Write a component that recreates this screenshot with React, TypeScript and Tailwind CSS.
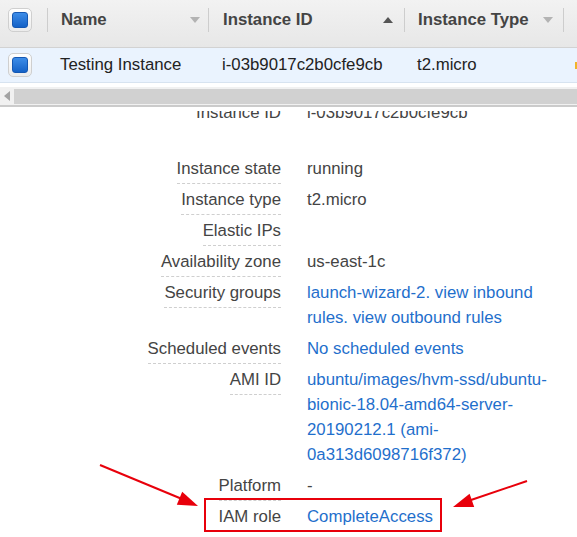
import React from "react";

const font = { fontFamily: '"Liberation Sans", Arial, sans-serif' };

function Checkbox() {
  return (
    <span className="grid h-[24px] w-[24px] place-items-center rounded-[5px] border border-[#cfcfcf] bg-gradient-to-b from-[#ffffff] to-[#ececec]">
      <span className="h-[16px] w-[16px] rounded-[3px] border border-[#1558b3] bg-gradient-to-b from-[#3d8de8] to-[#1462c7]" />
    </span>
  );
}

function Divider() {
  return <span className="h-[24px] w-px shrink-0 bg-[#cdcdcd]" />;
}

function Arrow({ up, dark }: { up?: boolean; dark?: boolean }) {
  return (
    <svg width="10" height="6" viewBox="0 0 10 6" className="shrink-0">
      <polygon points={up ? "0,6 10,6 5,0" : "0,0 10,0 5,6"} fill={dark ? "#555" : "#b3b3b3"} />
    </svg>
  );
}

type Row = { label: string; value?: string; link?: boolean; noLine?: boolean };

const rows: Row[] = [
  { label: "Instance state", value: "running" },
  { label: "Instance type", value: "t2.micro" },
  { label: "Elastic IPs" },
  { label: "Availability zone", value: "us-east-1c" },
  { label: "Security groups", value: "launch-wizard-2. view inbound rules. view outbound rules", link: true },
  { label: "Scheduled events", value: "No scheduled events", link: true },
  { label: "AMI ID", value: "ubuntu/images/hvm-ssd/ubuntu-bionic-18.04-amd64-server-20190212.1 (ami-0a313d6098716f372)", link: true },
  { label: "Platform", value: "-" },
  { label: "IAM role", value: "CompleteAccess", link: true },
];

function DetailRow({ row }: { row: Row }) {
  return (
    <>
      <div className="pb-[1px] pt-[2px] text-right">
        <span className={`inline-block pb-[2px] leading-[25px] ${row.noLine ? "border-b border-transparent" : "border-b border-dashed border-[#cfcfcf]"}`}>{row.label}</span>
      </div>
      <div className={`pb-[4px] pt-[2px] leading-[25px] ${row.link ? "text-[#1f6fcc]" : "text-[#444]"}`}>{row.value}</div>
    </>
  );
}

export default function App() {
  return (
    <div className="relative h-[537px] w-[577px] overflow-hidden bg-white text-[16.8px]" style={font}>
      <header className="flex h-[48px] items-center border-b border-[#d2d2d2] bg-gradient-to-b from-[#f2f2f2] to-[#e7e7e7] pb-[7px] font-bold text-[#444]">
        <div className="w-[47px] shrink-0 pl-[8px]"><Checkbox /></div>
        <Divider />
        <div className="flex w-[160px] shrink-0 items-center justify-between pl-[13px] pr-[8px]"><span>Name</span><Arrow /></div>
        <Divider />
        <div className="flex w-[195px] shrink-0 items-center justify-between pl-[14px] pr-[11px]"><span>Instance ID</span><Arrow up dark /></div>
        <Divider />
        <div className="flex w-[158px] shrink-0 items-center justify-between pl-[13px] pr-[10px]"><span>Instance Type</span><Arrow /></div>
        <Divider />
      </header>
      <div className="flex h-[35px] items-center border-b border-[#d7e3f0] bg-[#eaf3fe] text-[#222]">
        <div className="w-[48px] shrink-0 pl-[8px]"><Checkbox /></div>
        <div className="w-[161px] shrink-0 pl-[12px]">Testing Instance</div>
        <div className="w-[196px] shrink-0 pl-[13px]">i-03b9017c2b0cfe9cb</div>
        <div className="w-[158px] shrink-0 pl-[12px]">t2.micro</div>
        <span className="ml-auto h-[7px] w-[2px] bg-[#f0b429]" />
      </div>
      <div className="mt-[4px] flex h-[20px] items-center border-b-2 border-[#cbcbcb] bg-[#f1f1f1]">
        <div className="grid w-[14px] shrink-0 place-items-center">
          <svg width="6" height="10" viewBox="0 0 6 10"><polygon points="6,0 6,10 0,5" fill="#a3a3a3" /></svg>
        </div>
        <div className="h-[15px] flex-1 bg-[#d1d1d1]" />
      </div>
      <div className="mt-[4px] h-[426px] overflow-hidden text-[#444]">
        <div className="-mt-[13px] grid grid-cols-[281px_255px] gap-x-[26px]">
          <DetailRow row={{ label: "Instance ID", value: "i-03b9017c2b0cfe9cb", noLine: true }} />
          <div className="col-span-2 h-[25px]" />
          {rows.map((row) => <DetailRow key={row.label} row={row} />)}
        </div>
      </div>
      <svg className="pointer-events-none absolute inset-0" width="577" height="537" viewBox="0 0 577 537">
        <rect x="205" y="499" width="236" height="32" fill="none" stroke="#e8000b" strokeWidth="2" />
        <line x1="100" y1="465" x2="182" y2="499" stroke="#e8000b" strokeWidth="2" />
        <polygon points="198,506 176.8,504.8 182.2,491.8" fill="#e8000b" />
        <line x1="527" y1="481" x2="471" y2="500" stroke="#e8000b" strokeWidth="2" />
        <polygon points="453,507 469.6,493.8 474.2,507" fill="#e8000b" />
      </svg>
    </div>
  );
}
